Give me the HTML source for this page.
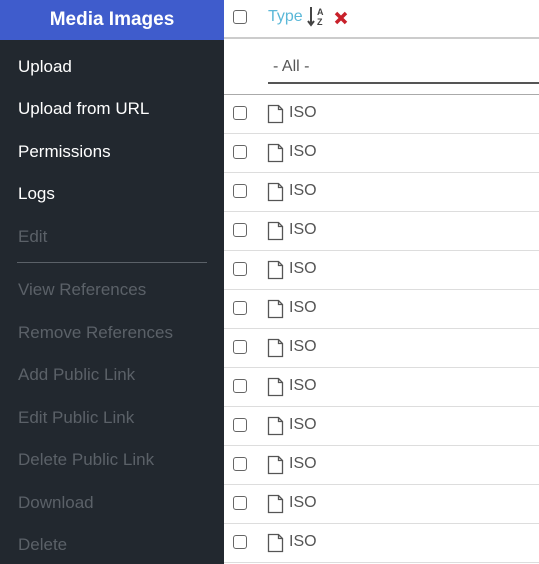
<!DOCTYPE html>
<html><head><style>
*{margin:0;padding:0;box-sizing:border-box}
body{width:539px;height:564px;overflow:hidden;font-family:"Liberation Sans",sans-serif;background:#fff;position:relative}
#side{position:absolute;left:0;top:0;width:224px;height:564px;background:#22282f}
#hd{height:40px;background:#3f5ccc;color:#fff;font-weight:bold;font-size:19px;text-align:center;line-height:40px}
.mi{position:absolute;left:18px;font-size:17px;color:#fff;line-height:20px}
.dis{color:#5b6168}
#div{position:absolute;left:17px;top:262px;width:190px;height:1px;background:#5b6168}
#main{position:absolute;left:224px;top:0;width:315px;height:564px}
.cb{position:absolute;left:9px;width:14px;height:14px;border:1.5px solid #666;border-radius:3px}
.row{position:absolute;left:0;width:315px;height:39px;border-bottom:1px solid #ddd}
.row .cb{top:11px}
.ic{position:absolute;left:43px;top:9px}
.iso{position:absolute;left:65px;top:9px;font-size:16px;color:#555}
</style></head><body>
<div id="side">
<div id="hd">Media Images</div>
<div class="mi" style="top:57px">Upload</div>
<div class="mi" style="top:99px">Upload from URL</div>
<div class="mi" style="top:142px">Permissions</div>
<div class="mi" style="top:184px">Logs</div>
<div class="mi dis" style="top:227px">Edit</div>
<div id="div"></div>
<div class="mi dis" style="top:280px">View References</div>
<div class="mi dis" style="top:323px">Remove References</div>
<div class="mi dis" style="top:365px">Add Public Link</div>
<div class="mi dis" style="top:408px">Edit Public Link</div>
<div class="mi dis" style="top:450px">Delete Public Link</div>
<div class="mi dis" style="top:493px">Download</div>
<div class="mi dis" style="top:535px">Delete</div>
</div>
<div id="main">
<div class="cb" style="top:10px"></div>
<div style="position:absolute;left:44px;top:8px;font-size:16px;color:#5bb8d8">Type</div>
<svg style="position:absolute;left:83px;top:6px" width="20" height="22" viewBox="0 0 20 22"><path d="M4 1v17M1 15l3 4 3-4" stroke="#444" stroke-width="2" fill="none"/><text x="10" y="9" font-size="9" font-weight="bold" fill="#444" font-family="Liberation Sans">A</text><text x="10" y="19" font-size="9" font-weight="bold" fill="#444" font-family="Liberation Sans">Z</text></svg>
<svg style="position:absolute;left:110px;top:11px" width="14" height="14" viewBox="0 0 14 14"><path d="M2 2l10 10M12 2L2 12" stroke="#c8202a" stroke-width="3.5"/></svg>
<div style="position:absolute;left:0;top:37px;width:315px;height:2px;background:#ccc"></div>
<div style="position:absolute;left:49px;top:58px;font-size:16px;color:#555">- All -</div>
<div style="position:absolute;left:44px;top:82px;width:271px;height:2px;background:#555"></div>
<div style="position:absolute;left:0;top:94px;width:315px;height:1px;background:#aaa"></div>
<div id="rows"></div>
</div>
<script>
var h='';for(var i=0;i<12;i++){h+='<div class="row" style="top:'+(95+i*39)+'px"><div class="cb"></div><svg class="ic" width="18" height="20" viewBox="0 0 18 20"><path d="M1.5 1.5h10l4 4v13h-14z M11.5 1.5v4h4" stroke="#555" stroke-width="1.3" fill="none"/></svg><div class="iso">ISO</div></div>';}
document.getElementById('rows').innerHTML=h;
</script>
</body></html>
